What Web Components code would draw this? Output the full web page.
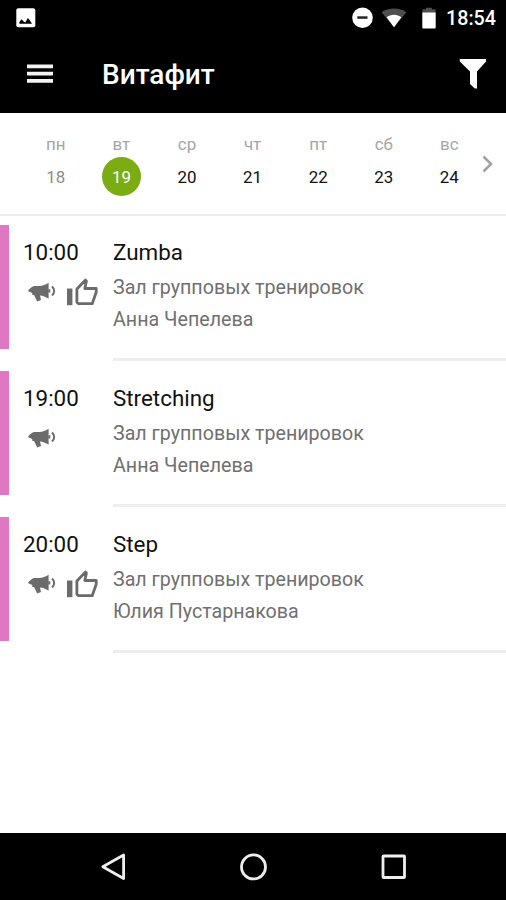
<!DOCTYPE html>
<html lang="ru">
<head>
  <meta charset="utf-8">
  <meta name="viewport" content="width=device-width, initial-scale=1">
  <title>Витафит</title>
  <style>
    html,
    body {
      height: 100%;
      margin: 0;
      background: #fff;
      font-family: Roboto, "Noto Sans", sans-serif;
    }
  </style>
</head>
<body>
  <schedule-screen>
    <status-bar slot="top" time="18:54"></status-bar>
    <app-bar slot="top">Витафит</app-bar>
    <week-strip slot="top">
      <week-day name="пн" past>18</week-day>
      <week-day name="вт" selected>19</week-day>
      <week-day name="ср">20</week-day>
      <week-day name="чт">21</week-day>
      <week-day name="пт">22</week-day>
      <week-day name="сб">23</week-day>
      <week-day name="вс">24</week-day>
    </week-strip>

    <class-item time="10:00" announced liked>
      <span slot="title">Zumba</span>
      <span slot="room">Зал групповых тренировок</span>
      <span slot="coach">Анна Чепелева</span>
    </class-item>
    <class-item time="19:00" announced>
      <span slot="title">Stretching</span>
      <span slot="room">Зал групповых тренировок</span>
      <span slot="coach">Анна Чепелева</span>
    </class-item>
    <class-item time="20:00" announced liked>
      <span slot="title">Step</span>
      <span slot="room">Зал групповых тренировок</span>
      <span slot="coach">Юлия Пустарнакова</span>
    </class-item>

    <nav-bar slot="bottom"></nav-bar>
  </schedule-screen>

  <script>
    class BaseElement extends HTMLElement {
      constructor() {
        super();

        this.attachShadow({ mode: 'open' });
      }

      connectedCallback() {
        this.render();
      }

      render() {
        this.shadowRoot.innerHTML = this.styles + this.template;
      }
    }

    class ScheduleScreen extends BaseElement {
      get styles() {
        return /*html*/`
          <style>
            :host {
              display: flex;
              flex-direction: column;
              height: 900px;
              overflow: hidden;
            }

            main {
              flex: 1;
            }
          </style>
        `;
      }

      get template() {
        return /*html*/`
          <slot name="top"></slot>
          <main><slot></slot></main>
          <slot name="bottom"></slot>
        `;
      }
    }

    class StatusBar extends BaseElement {
      get styles() {
        return /*html*/`
          <style>
            :host {
              display: flex;
              align-items: center;
              box-sizing: border-box;
              height: 35px;
              padding: 0 10px 0 16px;
              color: #fff;
              background: #000;
            }

            svg {
              display: block;
            }

            .system {
              display: flex;
              align-items: center;
              margin-left: auto;
            }

            .wifi {
              margin-left: 8px;
            }

            .battery {
              margin-left: 15px;
            }

            .time {
              margin-left: 10px;
              font-size: 19.7px;
              font-weight: 500;
              line-height: 35px;
              padding-top: 2px;
            }
          </style>
        `;
      }

      get template() {
        return /*html*/`
          <svg width="20" height="20" viewBox="0 0 20 20">
            <rect x=".3" y=".3" width="19" height="19" rx="2" fill="#fff"/>
            <path d="M3.4 15.800V14l2.200-2.800 2 2.200 1.700 1 2.600-4.400 2.400 3 1.700 2.800z" fill="#000"/>
          </svg>
          <div class="system">
            <svg width="21" height="22" viewBox="0 0 21 22">
              <circle cx="10.5" cy="10.700" r="10.3" fill="#fff"/>
              <path d="M5.300 9.300h10.200v2.500H5.300z" fill="#222"/>
            </svg>
            <svg class="wifi" width="26" height="22" viewBox="0 0 26 22">
              <path d="M.6 5.2C7.5.3 18.500.3 25.400 5.200L13 20.200z" fill="#4f4f4f"/>
              <path d="M5.600 10.300c4-3.500 10.800-3.500 14.800 0L13 20.200z" fill="#fff"/>
            </svg>
            <svg class="battery" width="14" height="22" viewBox="0 0 14 22">
              <path d="M4 .8h6v1.400h3.500V6h-13V2.200H4z" fill="#4f4f4f"/>
              <path d="M.3 5.500h13.400V20.500a1 1 0 0 1-1 1H1.300a1 1 0 0 1-1-1z" fill="#fff"/>
            </svg>
            <span class="time">${this.getAttribute('time')}</span>
          </div>
        `;
      }
    }

    class AppBar extends BaseElement {
      get styles() {
        return /*html*/`
          <style>
            :host {
              display: flex;
              align-items: center;
              box-sizing: border-box;
              height: 78px;
              padding: 0 19px 0 27px;
              color: #fff;
              background: #000;
            }

            svg {
              display: block;
            }

            h1 {
              flex: 1;
              margin: 0 0 0 48px;
              padding-top: 2px;
              font-size: 28px;
              font-weight: 500;
              line-height: 76px;
            }
          </style>
        `;
      }

      get template() {
        return /*html*/`
          <svg width="27" height="20" viewBox="0 0 27 20" fill="#f4f4f4">
            <path d="M0 .4h26v3.900H0zM0 7.700h26v3.800H0zM0 14.900h26v3.800H0z"/>
          </svg>
          <h1><slot></slot></h1>
          <svg width="28" height="30" viewBox="0 0 28 30" fill="#fff">
            <path d="M.8 0h26.200v2.600L18 12.500V29.500h-2.200L11 25V12.500L.8 2.600z"/>
          </svg>
        `;
      }
    }

    class WeekStrip extends BaseElement {
      get styles() {
        return /*html*/`
          <style>
            :host {
              display: flex;
              box-sizing: border-box;
              height: 103px;
              padding-left: 23px;
              border-bottom: 2px solid #ececec;
              background: #fff;
            }

            svg {
              display: block;
              margin: 42px 0 0;
            }
          </style>
        `;
      }

      get template() {
        return /*html*/`
          <slot></slot>
          <svg width="12" height="18" viewBox="0 0 12 18" fill="none" stroke="#a2a2a2" stroke-width="2.600">
            <path d="M1.500 1.500 9 9l-7.500 7.500"/>
          </svg>
        `;
      }
    }

    class WeekDay extends BaseElement {
      get styles() {
        return /*html*/`
          <style>
            :host {
              display: flex;
              flex: 0 0 65.600px;
              flex-direction: column;
              align-items: center;
              padding-top: 20px;
              color: #111;
              font-size: 16.900px;
            }

            :host([past]) {
              color: #8c8c8c;
            }

            :host([selected]) {
              color: #fff;
            }

            .name {
              color: #a6a6a6;
              line-height: 22px;
            }

            .date {
              width: 39px;
              height: 39px;
              margin-top: 2px;
              border-radius: 50%;
              line-height: 40px;
              text-align: center;
            }

            :host([selected]) .date {
              background: #7aad14;
            }
          </style>
        `;
      }

      get template() {
        return /*html*/`
          <span class="name">${this.getAttribute('name')}</span>
          <span class="date"><slot></slot></span>
        `;
      }
    }

    class ClassItem extends BaseElement {
      get styles() {
        return /*html*/`
          <style>
            :host {
              display: flex;
              box-sizing: border-box;
              height: 146px;
              padding-top: 9px;
              color: #707070;
            }

            .marker {
              width: 9px;
              height: 123.500px;
              background: #e077c3;
            }

            .when {
              width: 90px;
              padding-left: 14px;
            }

            .time,
            .title {
              margin-top: 12px;
              color: #111;
              font-size: 22.400px;
              line-height: 30px;
            }

            .icons {
              display: flex;
              align-items: center;
              height: 30px;
              margin-top: 10px;
              padding-left: 5px;
              gap: 11px;
            }

            .details {
              flex: 1;
              box-sizing: border-box;
              margin-bottom: 1px;
              border-bottom: 3px solid #eee;
            }

            .line {
              font-size: 19.650px;
              line-height: 32px;
            }

            .room {
              margin-top: 5px;
            }
          </style>
        `;
      }

      get announceIcon() {
        return /*html*/`
          <svg width="28" height="20" viewBox="0 0 28 20">
            <path d="M20.600.8v16c-3-2-5.600-3-8.600-3.300l1 4.600-3.800 1.300-3-6.100-2-.6V11L.3 9.300V8l3.900-3.300 2-.6h5C14.500 4 18 2.800 20.600.8z" fill="#6b6b6b"/>
            <path d="M21.300 7.300v3.200" stroke="#6b6b6b" stroke-width="2"/>
            <path d="M24 4.600c2.900 2.400 2.900 6.200 0 8.800" fill="none" stroke="#6b6b6b" stroke-width="2"/>
          </svg>
        `;
      }

      get likeIcon() {
        return /*html*/`
          <svg width="32" height="30" viewBox="0 0 32 30">
            <path d="M0 11.500h5.400V28.200H0z" fill="#6b6b6b"/>
            <path d="M9.900 12 18.500 3l.9 1.200-1.600 7.300h11.400v3.800L25.200 26.700H11.500l-1.600-1.500z" fill="none" stroke="#6b6b6b" stroke-width="2.800" stroke-linejoin="round"/>
          </svg>
        `;
      }

      get template() {
        return /*html*/`
          <div class="marker"></div>
          <div class="when">
            <div class="time">${this.getAttribute('time')}</div>
            <div class="icons">
              ${this.hasAttribute('announced') ? this.announceIcon : ''}
              ${this.hasAttribute('liked') ? this.likeIcon : ''}
            </div>
          </div>
          <div class="details">
            <div class="title"><slot name="title"></slot></div>
            <div class="line room"><slot name="room"></slot></div>
            <div class="line"><slot name="coach"></slot></div>
          </div>
        `;
      }
    }

    class NavBar extends BaseElement {
      get styles() {
        return /*html*/`
          <style>
            :host {
              display: flex;
              align-items: center;
              justify-content: center;
              gap: 112px;
              height: 67px;
              background: #000;
            }

            svg {
              display: block;
            }
          </style>
        `;
      }

      get template() {
        return /*html*/`
          <svg width="28" height="28" viewBox="0 0 28 28" fill="none" stroke="#eee" stroke-width="2.800" stroke-linejoin="round">
            <path d="M24.600 2v23.500L3.800 13.800z"/>
          </svg>
          <svg width="28" height="28" viewBox="0 0 28 28" fill="none" stroke="#eee" stroke-width="2.800">
            <circle cx="14.500" cy="13.900" r="12"/>
          </svg>
          <svg width="28" height="28" viewBox="0 0 28 28" fill="none" stroke="#eee" stroke-width="2.800">
            <rect x="4" y="3" width="21.500" height="21.500" rx=".6"/>
          </svg>
        `;
      }
    }

    customElements.define('schedule-screen', ScheduleScreen);
    customElements.define('status-bar', StatusBar);
    customElements.define('app-bar', AppBar);
    customElements.define('week-strip', WeekStrip);
    customElements.define('week-day', WeekDay);
    customElements.define('class-item', ClassItem);
    customElements.define('nav-bar', NavBar);
  </script>
</body>
</html>
